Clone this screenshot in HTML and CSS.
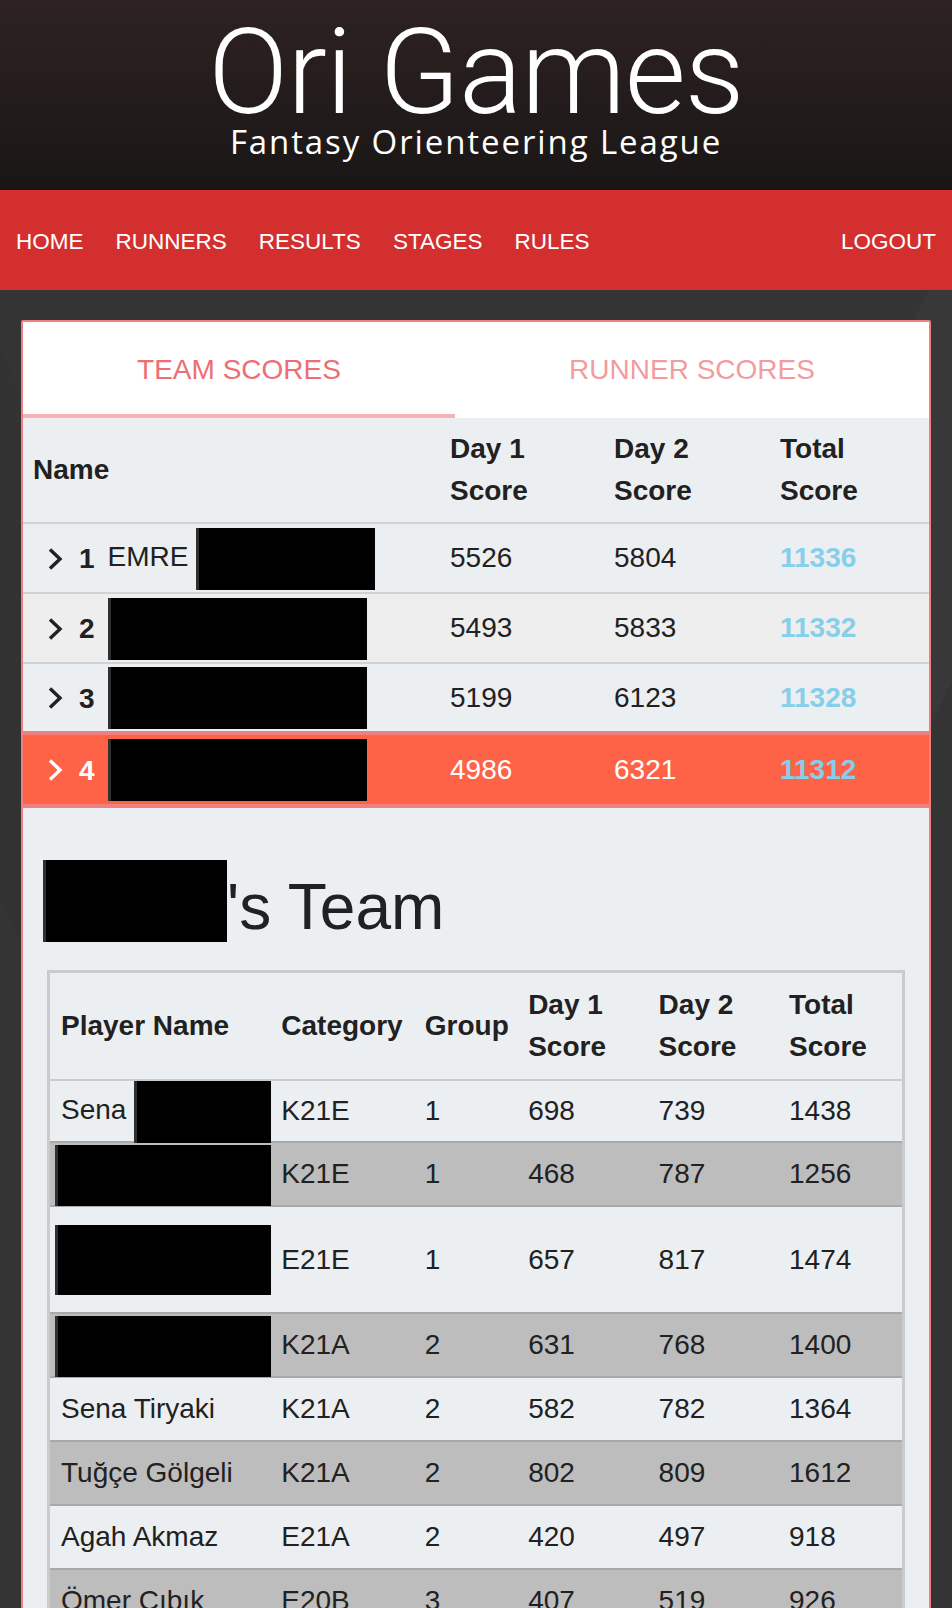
FILE: index.html
```html
<!DOCTYPE html>
<html lang="en">
<head>
<meta charset="utf-8">
<title>Ori Games - Fantasy Orienteering League</title>
<link rel="stylesheet" href="styles.css">
</head>
<body>
<header class="site-header">
  <div class="brand">Ori Games</div>
  <div class="tagline">Fantasy Orienteering League</div>
</header>
<nav class="main-nav">
  <ul class="nav-list">
    <li><a href="#">HOME</a></li>
    <li><a href="#">RUNNERS</a></li>
    <li><a href="#">RESULTS</a></li>
    <li><a href="#">STAGES</a></li>
    <li><a href="#">RULES</a></li>
  </ul>
  <ul class="nav-list">
    <li><a href="#">LOGOUT</a></li>
  </ul>
</nav>
<main class="content">
  <section class="card">
    <div class="tabs">
      <a class="tab active" href="#">TEAM SCORES</a>
      <a class="tab" href="#">RUNNER SCORES</a>
    </div>
    <table class="scores">
      <colgroup>
        <col class="c-name"><col class="c-d1"><col class="c-d2"><col class="c-tot">
      </colgroup>
      <thead>
        <tr><th>Name</th><th>Day 1<br>Score</th><th>Day 2<br>Score</th><th>Total<br>Score</th></tr>
      </thead>
      <tbody>
        <tr>
          <td class="name-cell"><svg class="chev" viewBox="0 0 16 24" width="16" height="24"><polyline points="3,2.5 13,12 3,21.5"/></svg><span class="rank">1</span>EMRE <span class="redact redact-r1"></span></td>
          <td>5526</td><td>5804</td><td class="total">11336</td>
        </tr>
        <tr>
          <td class="name-cell"><svg class="chev" viewBox="0 0 16 24" width="16" height="24"><polyline points="3,2.5 13,12 3,21.5"/></svg><span class="rank">2</span><span class="redact redact-r2"></span></td>
          <td>5493</td><td>5833</td><td class="total">11332</td>
        </tr>
        <tr>
          <td class="name-cell"><svg class="chev" viewBox="0 0 16 24" width="16" height="24"><polyline points="3,2.5 13,12 3,21.5"/></svg><span class="rank">3</span><span class="redact redact-r2"></span></td>
          <td>5199</td><td>6123</td><td class="total">11328</td>
        </tr>
        <tr class="selected">
          <td class="name-cell"><svg class="chev" viewBox="0 0 16 24" width="16" height="24"><polyline points="3,2.5 13,12 3,21.5"/></svg><span class="rank">4</span><span class="redact redact-r2"></span></td>
          <td>4986</td><td>6321</td><td class="total">11312</td>
        </tr>
      </tbody>
    </table>
    <div class="team-panel">
      <h4 class="team-title"><span class="redact redact-title"></span>'s Team</h4>
      <table class="team">
        <colgroup>
          <col class="t-name"><col class="t-cat"><col class="t-grp"><col class="t-d1"><col class="t-d2"><col class="t-tot">
        </colgroup>
        <thead>
          <tr><th>Player Name</th><th>Category</th><th>Group</th><th>Day 1<br>Score</th><th>Day 2<br>Score</th><th>Total<br>Score</th></tr>
        </thead>
        <tbody>
          <tr class="first"><td>Sena <span class="redact redact-short"></span></td><td>K21E</td><td>1</td><td>698</td><td>739</td><td>1438</td></tr>
          <tr><td><span class="redact redact-wide"></span></td><td>K21E</td><td>1</td><td>468</td><td>787</td><td>1256</td></tr>
          <tr class="tall"><td><span class="redact redact-wide redact-tall"></span></td><td>E21E</td><td>1</td><td>657</td><td>817</td><td>1474</td></tr>
          <tr><td><span class="redact redact-wide"></span></td><td>K21A</td><td>2</td><td>631</td><td>768</td><td>1400</td></tr>
          <tr><td>Sena Tiryaki</td><td>K21A</td><td>2</td><td>582</td><td>782</td><td>1364</td></tr>
          <tr><td>Tuğçe Gölgeli</td><td>K21A</td><td>2</td><td>802</td><td>809</td><td>1612</td></tr>
          <tr><td>Agah Akmaz</td><td>E21A</td><td>2</td><td>420</td><td>497</td><td>918</td></tr>
          <tr><td>Ömer Çıbık</td><td>E20B</td><td>3</td><td>407</td><td>519</td><td>926</td></tr>
        </tbody>
      </table>
    </div>
  </section>
</main>
</body>
</html>
```
FILE: styles.css
```css
* { box-sizing: border-box; }
html, body { margin: 0; padding: 0; }
body {
  width: 952px;
  background-color: #343434;
  background-image:
    linear-gradient(115deg, rgba(255,255,255,0) 62%, rgba(255,255,255,0.018) 62%, rgba(255,255,255,0.018) 74%, rgba(255,255,255,0) 74%),
    linear-gradient(65deg, rgba(0,0,0,0) 20%, rgba(0,0,0,0.03) 20%, rgba(0,0,0,0.03) 35%, rgba(0,0,0,0) 35%);
  font-family: "Liberation Sans", Arial, sans-serif;
  color: #212121;
}

/* Header */
.site-header {
  height: 190px;
  padding-top: 23px;
  background: linear-gradient(180deg, #2e2222 0%, #1a1616 100%);
  text-align: center;
  color: #fff;
}
.brand {
  font-family: Roboto, "DejaVu Sans", sans-serif;
  font-weight: 300;
  font-size: 118px;
  line-height: 100px;
  letter-spacing: -1px;
}
.tagline {
  font-family: "Open Sans", "DejaVu Sans", sans-serif;
  font-size: 33px;
  line-height: 38px;
  letter-spacing: 1.9px;
}

/* Nav */
.main-nav {
  height: 100px;
  background: #d32f2f;
  display: flex;
  justify-content: space-between;
  align-items: center;
}
.nav-list {
  display: flex;
  list-style: none;
  margin: 0;
  padding: 0;
}
.nav-list a {
  display: block;
  padding: 4px 16px 0;
  color: #fff;
  text-decoration: none;
  font-size: 22.5px;
  line-height: 96px;
}

/* Card */
.content { padding: 30px 21px 0; }
.card {
  background: #eceff1;
  border: 2px solid #f08080;
  border-radius: 2px;
}
.tabs {
  display: flex;
  height: 96px;
  background: #fff;
}
.tab {
  flex: 1 1 auto;
  text-align: center;
  font-size: 28px;
  line-height: 96px;
  color: rgba(238, 110, 115, 0.7);
  text-decoration: none;
}
.tab.active {
  color: #ee6e73;
  box-shadow: inset 0 -4px 0 #f6b2b5;
}

/* Scores table */
.scores {
  width: 100%;
  border-collapse: collapse;
  table-layout: fixed;
  font-size: 28px;
  line-height: 42px;
}
.c-name { width: 417px; }
.c-d1 { width: 164px; }
.c-d2 { width: 166px; }
.c-tot { width: 159px; }
.scores th {
  text-align: left;
  font-weight: 700;
  padding: 10px 10px;
  border-bottom: 2px solid #cfd1d3;
  vertical-align: middle;
}
.scores td {
  padding: 0 10px;
  height: 70px;
  border-bottom: 2px solid #cfd1d3;
  vertical-align: middle;
  white-space: nowrap;
}
.scores tbody tr:nth-child(even) { background: #eeeeee; }
.scores .total { color: #87ceeb; font-weight: 700; }
.chev {
  vertical-align: middle;
  margin: 0 16px 0 14px;
  fill: none;
  stroke: #212121;
  stroke-width: 3.4;
  stroke-linejoin: miter;
}
.rank { font-weight: 700; margin-right: 13px; position: relative; top: 2px; }
.scores tbody tr.selected { background: #ff6347; color: #fff; }
.scores tbody tr.selected td {
  height: 73px;
  border-top: 4px solid #f08080;
  border-bottom: 4px solid #f08080;
}
.scores tbody tr.selected .chev { stroke: #fff; }

/* Redaction blocks */
.redact {
  display: inline-block;
  background: #000;
  border-left: 3px solid #2f2f2f;
  vertical-align: middle;
}
.redact-r1 { width: 179px; height: 62px; margin: -10px 0; }
.redact-r2 { width: 259px; height: 62px; margin: -10px 0; }

/* Team panel */
.team-panel { padding: 52px 24px 0; }
.team-title {
  margin: 0 0 28px -4px;
  font-size: 64px;
  line-height: 70px;
  font-weight: 400;
  color: #212121;
}
.redact-title { width: 184px; height: 82px; vertical-align: -13px; }

.team {
  width: 100%;
  border-collapse: collapse;
  table-layout: fixed;
  border: 3px solid #cbcbcb;
  font-size: 28px;
  line-height: 42px;
}
.t-name { width: 222px; }
.t-cat { width: 143px; }
.t-grp { width: 103px; }
.t-d1 { width: 130px; }
.t-d2 { width: 130px; }
.t-tot { width: 124px; }
.team th {
  text-align: left;
  font-weight: 700;
  padding: 11px 10px;
  border-bottom: 2px solid #cbcbcb;
  vertical-align: middle;
  white-space: nowrap;
}
.team th:first-child, .team td:first-child { padding-left: 11px; }
.team td {
  padding: 0 10px;
  height: 64px;
  border-bottom: 2px solid #a9a9a9;
  vertical-align: middle;
  white-space: nowrap;
}
.team tbody tr:nth-child(even) { background: #bdbdbd; }
.team tr.first td { height: 62px; }
.team tr.tall td { height: 107px; }
.redact-short { width: 137px; height: 62px; margin: -10px 0; }
.redact-wide { width: 216px; height: 61px; margin: -10px 0 -10px -6px; }
.redact-tall { height: 70px; margin: -14px 0 -14px -6px; }
```
